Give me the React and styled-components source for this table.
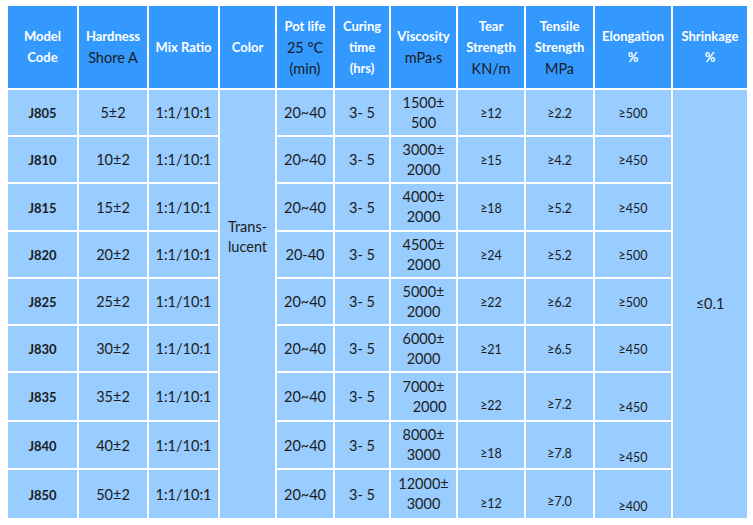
import React from "react"
import styled, { createGlobalStyle } from "styled-components"

const GlobalStyle = createGlobalStyle`
  body {
    margin: 0;
    background: #ffffff;
    font-family: Lato, "Open Sans", sans-serif;
  }
`

const widths = [71, 70, 71, 57, 58, 56, 67, 68, 69, 78, 76]

const rows = [
  { code: 'J805', hard: '5±2', pot: '20~40', visc: ['1500±', '500'], tear: '≥12', tens: '≥2.2', elong: '≥500' },
  { code: 'J810', hard: '10±2', pot: '20~40', visc: ['3000±', '2000'], tear: '≥15', tens: '≥4.2', elong: '≥450' },
  { code: 'J815', hard: '15±2', pot: '20~40', visc: ['4000±', '2000'], tear: '≥18', tens: '≥5.2', elong: '≥450', h: 48 },
  { code: 'J820', hard: '20±2', pot: '20-40', visc: ['4500±', '2000'], tear: '≥24', tens: '≥5.2', elong: '≥500' },
  { code: 'J825', hard: '25±2', pot: '20~40', visc: ['5000±', '2000'], tear: '≥22', tens: '≥6.2', elong: '≥500' },
  { code: 'J830', hard: '30±2', pot: '20~40', visc: ['6000±', '2000'], tear: '≥21', tens: '≥6.5', elong: '≥450' },
  { code: 'J835', hard: '35±2', pot: '20~40', visc: ['7000±', '2000'], tear: '≥22', tens: '≥7.2', elong: '≥450', shift: [18, 16, 22], indent: true, h: 49 },
  { code: 'J840', hard: '40±2', pot: '20~40', visc: ['8000±', '3000'], tear: '≥18', tens: '≥7.8', elong: '≥450', shift: [16, 16, 24], h: 48 },
  { code: 'J850', hard: '50±2', pot: '20~40', visc: ['12000±', '3000'], tear: '≥12', tens: '≥7.0', elong: '≥400', shift: [18, 14, 24], h: 50 },
]

export default function App() {
  return (
    <>
      <GlobalStyle />
      <Table>
        <colgroup>
          {widths.map((w, i) => <col key={i} style={{ width: w }} />)}
        </colgroup>
        <thead>
          <tr>
            <Th><Bold>Model</Bold><Bold>Code</Bold></Th>
            <Th><Bold>Hardness</Bold><Thin>Shore A</Thin></Th>
            <Th><Bold>Mix Ratio</Bold></Th>
            <Th><Bold>Color</Bold></Th>
            <Th><Bold>Pot life</Bold><Thin>25 °C</Thin><Thin>(min)</Thin></Th>
            <Th><Bold>Curing</Bold><Bold>time</Bold><Bold>(hrs)</Bold></Th>
            <Th><Bold>Viscosity</Bold><Thin>mPa·s</Thin></Th>
            <Th><Bold>Tear</Bold><Bold>Strength</Bold><Thin>KN/m</Thin></Th>
            <Th><Bold>Tensile</Bold><Bold>Strength</Bold><Thin>MPa</Thin></Th>
            <Th><Bold>Elongation</Bold><Bold>%</Bold></Th>
            <Th><Bold>Shrinkage</Bold><Bold>%</Bold></Th>
          </tr>
        </thead>
        <tbody>
          {rows.map((r, i) => (
            <Row key={r.code} $h={r.h}>
              <Td><Code>{r.code}</Code></Td>
              <Td>{r.hard}</Td>
              <Td>1:1/10:1</Td>
              {i === 0 && (
                <Td rowSpan={rows.length}>
                  <Merged $lift={134}>Trans-<br />lucent</Merged>
                </Td>
              )}
              <Td>{r.pot}</Td>
              <Td>3- 5</Td>
              <Td>
                <Visc>
                  <span>{r.visc[0]}</span>
                  <ViscLow $indent={r.indent}>{r.visc[1]}</ViscLow>
                </Visc>
              </Td>
              <Td><Small $shift={r.shift?.[0]}>{r.tear}</Small></Td>
              <Td><Small $shift={r.shift?.[1]}>{r.tens}</Small></Td>
              <Td><Small $shift={r.shift?.[2]}>{r.elong}</Small></Td>
              {i === 0 && (
                <Td rowSpan={rows.length}>
                  <Merged>≤0.1</Merged>
                </Td>
              )}
            </Row>
          ))}
        </tbody>
      </Table>
    </>
  )
}

const Table = styled.table`
  margin: 6px 6px;
  width: 741px;
  table-layout: fixed;
  border-collapse: collapse;
  color: #1c1c1c;
`

const Th = styled.th`
  background: #3399ff;
  border: 2px solid #ffffff;
  border-top: none;
  height: 82px;
  padding: 0 2px;
  text-align: center;
  vertical-align: middle;
  font-weight: normal;
`

const Bold = styled.div`
  color: #ffffff;
  font-weight: 700;
  font-size: 13px;
  line-height: 21px;
  white-space: nowrap;
`

const Thin = styled.div`
  color: #1c1c1c;
  font-size: 14.5px;
  line-height: 21px;
  white-space: nowrap;
`

const Row = styled.tr`
  height: ${({ $h }) => $h || 47}px;
`

const Td = styled.td`
  background: #99ccff;
  border: 2px solid #ffffff;
  padding: 0;
  text-align: center;
  vertical-align: middle;
  font-size: 14.5px;
  white-space: nowrap;
`

const Code = styled.span`
  font-weight: 700;
  font-size: 13px;
`

const Visc = styled.div`
  display: flex;
  flex-direction: column;
  align-items: center;
  line-height: 20px;
`

const ViscLow = styled.span`
  padding-left: ${({ $indent }) => ($indent ? '12px' : '0')};
`

const Small = styled.span`
  display: inline-block;
  font-size: 12.5px;
  padding-top: ${({ $shift }) => $shift || 0}px;
`

const Merged = styled.div`
  line-height: 20px;
  font-size: 14.5px;
  padding-bottom: ${({ $lift }) => $lift || 0}px;
`
